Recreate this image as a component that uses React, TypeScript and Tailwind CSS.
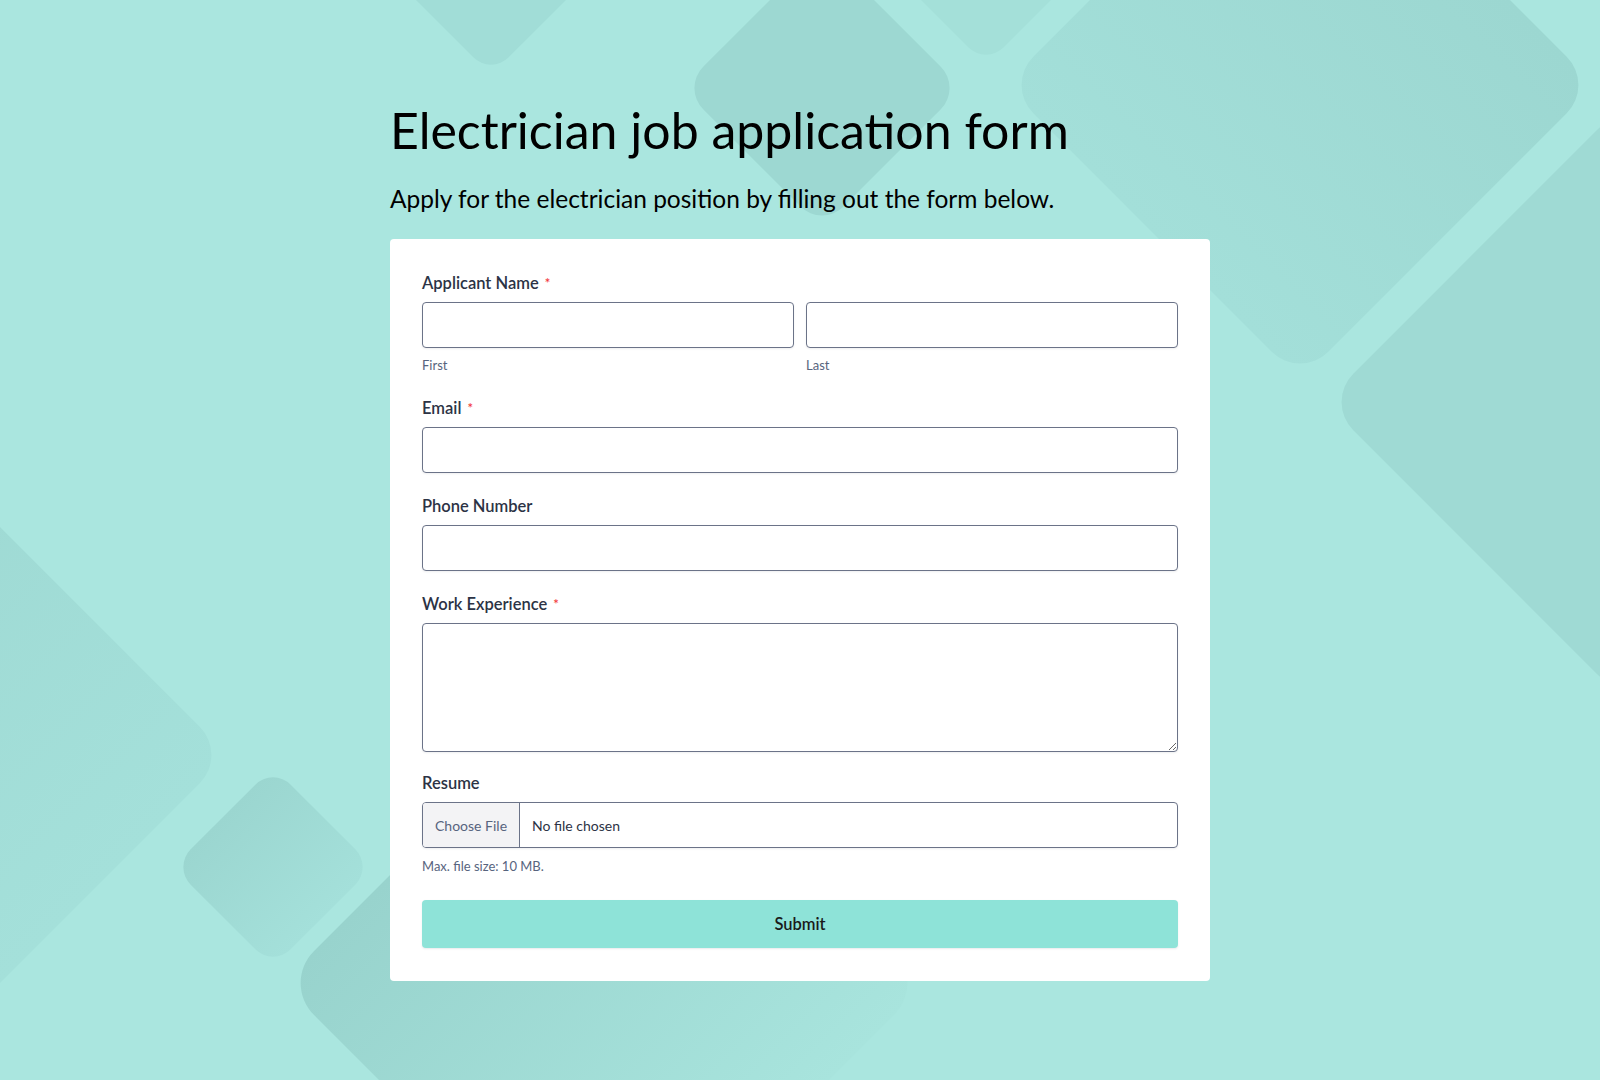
import React from "react";

type Diamond = {
  cx: number;
  cy: number;
  h: number;
  r: number;
  fill: string;
};

// background tiles: rounded squares turned 45deg
const diamonds: Diamond[] = [
  { cx: 491, cy: -45, h: 120, r: 25, fill: "#a1ddd7" },
  { cx: 822, cy: 88, h: 140, r: 30, fill: "#9dd8d2" },
  { cx: 986, cy: -60, h: 125, r: 25, fill: "#a4e0d9" },
  { cx: 1300, cy: 85, h: 295, r: 40, fill: "url(#gradA)" },
  { cx: 1625, cy: 402, h: 300, r: 40, fill: "#9fdad4" },
  { cx: -72, cy: 755, h: 300, r: 40, fill: "url(#gradC)" },
  { cx: 273, cy: 867, h: 100, r: 25, fill: "url(#gradD)" },
  { cx: 604, cy: 983, h: 322, r: 45, fill: "url(#gradE)" },
];

function Background() {
  return (
    <svg
      className="absolute inset-0"
      width="1600"
      height="1080"
      viewBox="0 0 1600 1080"
    >
      <defs>
        <linearGradient id="gradA" x1="0" y1="0" x2="0" y2="1">
          <stop offset="0" stopColor="#9cd7d1" />
          <stop offset="1" stopColor="#a3dfd9" />
        </linearGradient>
        <linearGradient id="gradC" x1="0" y1="0" x2="1" y2="0">
          <stop offset="0" stopColor="#9ed9d3" />
          <stop offset="1" stopColor="#a4e0da" />
        </linearGradient>
        <linearGradient id="gradD" x1="0" y1="0" x2="1" y2="0">
          <stop offset="0" stopColor="#9bd6d0" />
          <stop offset="1" stopColor="#a4e0da" />
        </linearGradient>
        <linearGradient id="gradE" x1="0" y1="0" x2="1" y2="0">
          <stop offset="0" stopColor="#98d3cd" />
          <stop offset="1" stopColor="#a8e4dd" />
        </linearGradient>
      </defs>
      {diamonds.map((d, i) => {
        const s = d.h * Math.SQRT2;
        return (
          <rect
            key={i}
            x={d.cx - s / 2}
            y={d.cy - s / 2}
            width={s}
            height={s}
            rx={d.r}
            fill={d.fill}
            transform={`rotate(45 ${d.cx} ${d.cy})`}
          />
        );
      })}
    </svg>
  );
}

function Label({ text, required }: { text: string; required?: boolean }) {
  return (
    <label className="block text-[16.5px] leading-[20px] font-semibold text-[#2c3345] mb-[9px]">
      {text}
      {required && <span className="text-[#f23a3c] text-[13px] ml-[6px] align-top">*</span>}
    </label>
  );
}

const inputClass =
  "block w-full h-[46px] px-3 bg-white border border-[#6b7388] rounded-[4px] shadow-[0_1px_2px_rgba(43,50,69,0.08)] outline-none";

export default function App() {
  return (
    <div
      className="relative w-full h-[1080px] overflow-hidden bg-[#aae6df]"
      style={{ fontFamily: "Lato, 'Noto Sans', sans-serif" }}
    >
      <Background />
      <div className="relative w-[820px] mx-auto pt-[100px]">
        <h1 className="text-[50px] leading-[60px] font-normal text-black">
          Electrician job application form
        </h1>
        <p className="mt-[24px] text-[24.5px] leading-[29px] text-black">
          Apply for the electrician position by filling out the form below.
        </p>

        <form className="mt-[26px] bg-white rounded-[4px] px-8 pt-[34px] pb-[33px]">
          <div>
            <Label text="Applicant Name" required />
            <div className="grid grid-cols-2 gap-3">
              <div>
                <input type="text" className={inputClass} />
                <div className="mt-[9px] text-[13px] leading-[16px] text-[#57647e]">First</div>
              </div>
              <div>
                <input type="text" className={inputClass} />
                <div className="mt-[9px] text-[13px] leading-[16px] text-[#57647e]">Last</div>
              </div>
            </div>
          </div>

          <div className="mt-[25px]">
            <Label text="Email" required />
            <input type="email" className={inputClass} />
          </div>

          <div className="mt-[23px]">
            <Label text="Phone Number" />
            <input type="tel" className={inputClass} />
          </div>

          <div className="mt-[23px]">
            <Label text="Work Experience" required />
            <textarea className="block w-full h-[129px] px-3 py-2 bg-white border border-[#6b7388] rounded-[4px] shadow-[0_1px_2px_rgba(43,50,69,0.08)] outline-none" />
          </div>

          <div className="mt-[21px]">
            <Label text="Resume" />
            <div className="flex h-[46px] w-full border border-[#6b7388] rounded-[4px] overflow-hidden shadow-[0_1px_2px_rgba(43,50,69,0.08)]">
              <span className="flex items-center px-3 bg-[#f3f3f5] border-r border-[#6b7388] text-[14px] text-[#57647e]">
                Choose File
              </span>
              <span className="flex items-center px-3 text-[14px] text-[#2c3345]">
                No file chosen
              </span>
            </div>
            <div className="mt-[10px] text-[13px] leading-[16px] text-[#57647e]">
              Max. file size: 10 MB.
            </div>
          </div>

          <button
            type="button"
            className="mt-[26px] block w-full h-[48px] rounded-[4px] bg-[#8ee3d8] text-[16.5px] font-semibold text-[#1a1a1a] shadow-[0_1px_2px_rgba(43,50,69,0.1)]"
          >
            Submit
          </button>
        </form>
      </div>
    </div>
  );
}
